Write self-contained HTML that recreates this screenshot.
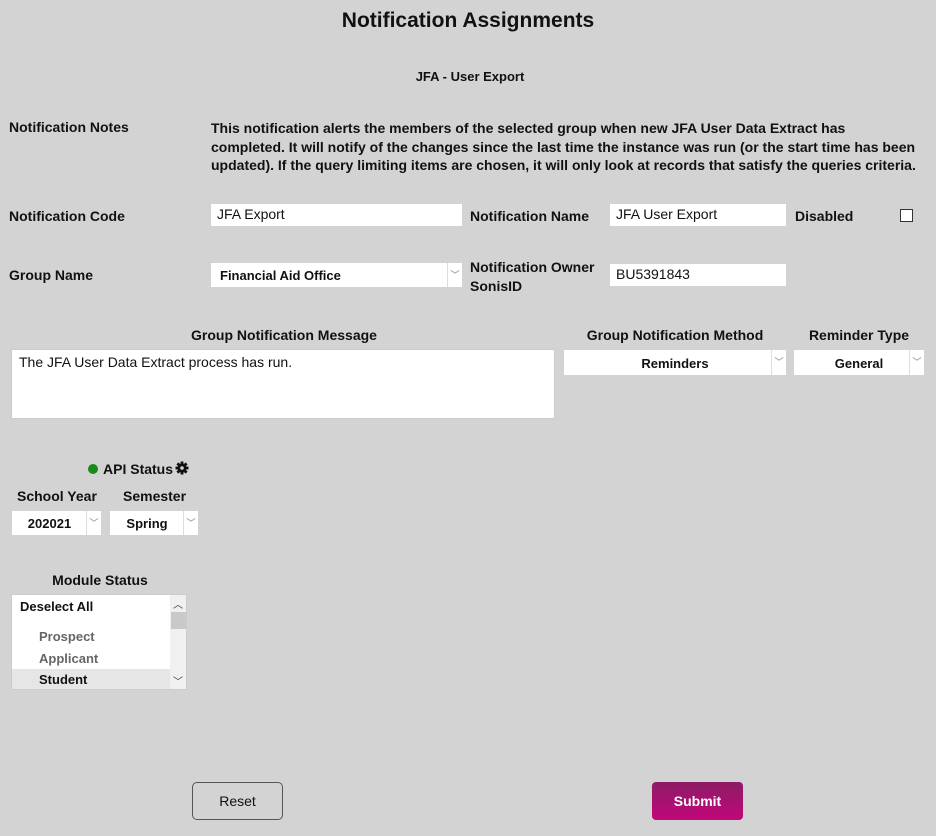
<!DOCTYPE html>
<html><head><style>
body{margin:0;width:936px;height:836px;background:#d3d3d3;font-family:"Liberation Sans",sans-serif;color:#111;position:relative;overflow:hidden}
.a{position:absolute;white-space:nowrap}
.b{font-weight:bold;font-size:14px}
.in{position:absolute;background:#fff;font-size:14px;box-sizing:border-box;padding-left:6px}
.sel{position:absolute;background:#fff;font-size:13px;font-weight:bold;text-align:center;box-sizing:border-box}
.sel .ar{position:absolute;right:0;top:0;bottom:0;width:14px;border-left:1px solid #ddd;color:#aaa;font-size:9px;line-height:22px;text-align:center}
</style></head><body>
<div class="a" style="left:0;width:936px;top:9px;text-align:center;font-size:21px;font-weight:bold">Notification Assignments</div>
<div class="a b" style="left:0;width:940px;top:69px;text-align:center;font-size:13px">JFA - User Export</div>
<div class="a b" style="left:9px;top:119px">Notification Notes</div>
<div class="a b" style="left:211px;top:119px;line-height:18.5px">This notification alerts the members of the selected group when new JFA User Data Extract has<br>completed. It will notify of the changes since the last time the instance was run (or the start time has been<br>updated). If the query limiting items are chosen, it will only look at records that satisfy the queries criteria.</div>

<div class="a b" style="left:9px;top:208px">Notification Code</div>
<div class="in" style="left:211px;top:204px;width:251px;height:22px;line-height:20px">JFA Export</div>
<div class="a b" style="left:470px;top:208px">Notification Name</div>
<div class="in" style="left:610px;top:204px;width:176px;height:22px;line-height:20px">JFA User Export</div>
<div class="a b" style="left:795px;top:208px">Disabled</div>
<div class="a" style="left:900px;top:209px;width:11px;height:11px;border:1px solid #333;background:#fff"></div>

<div class="a b" style="left:9px;top:267px">Group Name</div>
<div class="sel" style="left:211px;top:263px;width:251px;height:24px;text-align:left;padding-left:9px;line-height:26px">Financial Aid Office<span class="ar" style="line-height:24px">﹀</span></div>
<div class="a b" style="left:470px;top:258px;line-height:19px">Notification Owner<br>SonisID</div>
<div class="in" style="left:610px;top:264px;width:176px;height:22px;line-height:20px">BU5391843</div>

<div class="a b" style="left:0;width:568px;top:327px;text-align:center">Group Notification Message</div>
<div class="in" style="left:11px;top:349px;width:544px;height:70px;padding:4px 7px;border:1px solid #ccc">The JFA User Data Extract process has run.</div>
<div class="a b" style="left:564px;width:222px;top:327px;text-align:center">Group Notification Method</div>
<div class="sel" style="left:564px;top:350px;width:222px;height:25px;line-height:28px">Reminders<span class="ar" style="line-height:25px">﹀</span></div>
<div class="a b" style="left:794px;width:130px;top:327px;text-align:center">Reminder Type</div>
<div class="sel" style="left:794px;top:350px;width:130px;height:25px;line-height:28px">General<span class="ar" style="line-height:25px">﹀</span></div>

<div class="a" style="left:88px;top:464px;width:10px;height:10px;border-radius:50%;background:#1a8a1a"></div>
<div class="a b" style="left:103px;top:461px">API Status</div>
<svg class="a" style="left:175px;top:461px" width="14" height="14" viewBox="0 0 14 14"><g fill="#111"><circle cx="7" cy="7" r="4.6"/><rect x="5.6" y="0.5" width="2.8" height="13"/><rect x="0.5" y="5.6" width="13" height="2.8"/><rect x="5.6" y="0.5" width="2.8" height="13" transform="rotate(45 7 7)"/><rect x="5.6" y="0.5" width="2.8" height="13" transform="rotate(-45 7 7)"/></g><circle cx="7" cy="7" r="1.8" fill="#d3d3d3"/></svg>
<div class="a b" style="left:17px;top:488px">School Year</div>
<div class="a b" style="left:123px;top:488px">Semester</div>
<div class="sel" style="left:12px;top:511px;width:89px;height:24px;line-height:26px;padding-right:14px">202021<span class="ar" style="line-height:24px">﹀</span></div>
<div class="sel" style="left:110px;top:511px;width:88px;height:24px;line-height:26px;padding-right:14px">Spring<span class="ar" style="line-height:24px">﹀</span></div>

<div class="a b" style="left:0;width:200px;top:572px;text-align:center">Module Status</div>
<div class="a" style="left:11px;top:594px;width:176px;height:96px;background:#fff;border:1px solid #ccc;box-sizing:border-box;overflow:hidden">
 <div class="a b" style="left:8px;top:4px;font-size:13px">Deselect All</div>
 <div class="a b" style="left:27px;top:34px;font-size:13px;color:#666">Prospect</div>
 <div class="a b" style="left:27px;top:56px;font-size:13px;color:#666">Applicant</div>
 <div class="a" style="left:0;top:74px;width:158px;height:21px;background:#e6e6e6"></div>
 <div class="a b" style="left:27px;top:77px;font-size:13px">Student</div>
 <div class="a" style="left:158px;top:0;width:17px;height:96px;background:#f0f0f0"></div>
 <div class="a" style="left:159px;top:17px;width:15px;height:17px;background:#c9c9c9"></div>
 <div class="a" style="left:161px;top:1px;font-size:10px;color:#333">︿</div>
 <div class="a" style="left:161px;top:78px;font-size:10px;color:#333">﹀</div>
</div>

<div class="a" style="left:192px;top:782px;width:91px;height:38px;border:1px solid #555;border-radius:5px;box-sizing:border-box;text-align:center;line-height:36px;font-size:14px">Reset</div>
<div class="a" style="left:652px;top:782px;width:91px;height:38px;border-radius:4px;background:linear-gradient(#8c1c64,#c2077a);color:#fff;text-align:center;line-height:38px;font-size:14px;font-weight:bold">Submit</div>
</body></html>
